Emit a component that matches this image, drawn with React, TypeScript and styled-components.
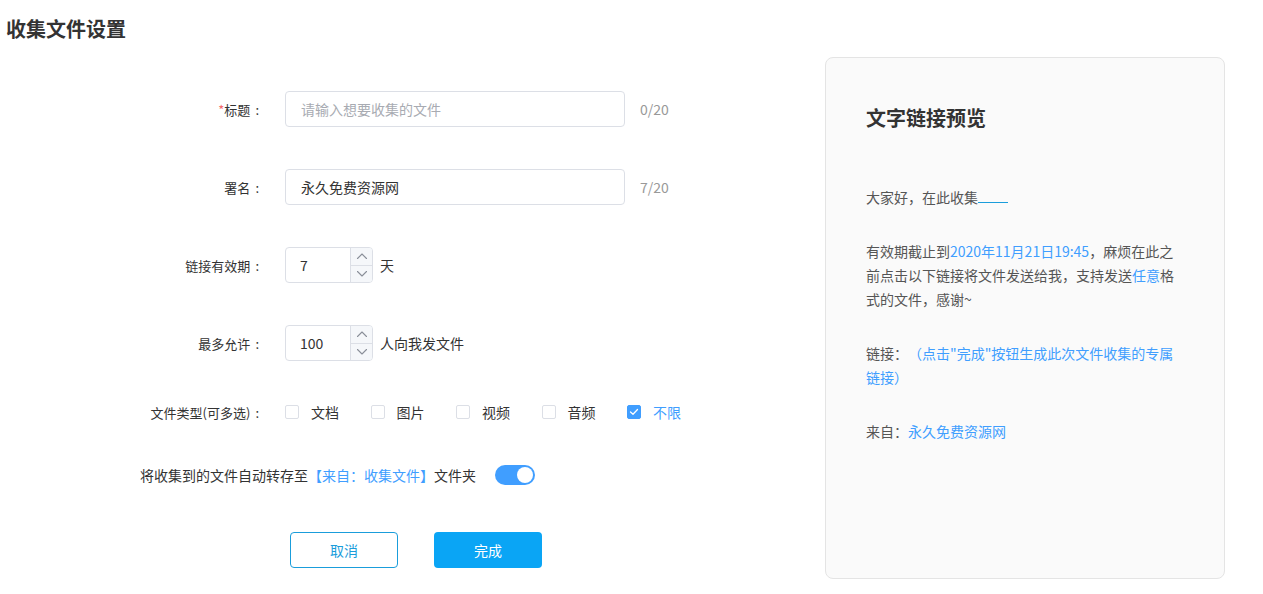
import React, { useState } from 'react';
import { createGlobalStyle, styled } from 'styled-components';

const GlobalStyle = createGlobalStyle`
  * { box-sizing: border-box; }
  body {
    margin: 0;
    background: #fff;
    font-family: 'Noto Sans CJK SC', 'Noto Sans', sans-serif;
    color: #333;
    text-spacing-trim: space-all;
  }
`;

const BLUE = '#409eff';

const Chevron = ({ up }: { up?: boolean }) => (
  <svg width="12" height="8" viewBox="0 0 12 8" fill="none">
    <path
      d={up ? 'M1.5 6.5 L6 2 L10.5 6.5' : 'M1.5 1.5 L6 6 L10.5 1.5'}
      stroke="#8a8f99"
      strokeWidth="1.1"
      strokeLinecap="round"
      strokeLinejoin="round"
    />
  </svg>
);

const CheckMark = () => (
  <svg width="10" height="8" viewBox="0 0 10 8" fill="none">
    <path d="M1.5 4 L4 6.3 L8.5 1.5" stroke="#fff" strokeWidth="1.3" strokeLinecap="round" strokeLinejoin="round" />
  </svg>
);

const fileTypes = ['文档', '图片', '视频', '音频', '不限'];

const App = () => {
  const [title, setTitle] = useState('');
  const [sign, setSign] = useState('永久免费资源网');
  const [days, setDays] = useState(7);
  const [limit, setLimit] = useState(100);
  const [checked, setChecked] = useState<string[]>(['不限']);
  const [autoSave, setAutoSave] = useState(true);

  const toggleType = (t: string) => {
    setChecked(checked.includes(t) ? checked.filter((c) => c !== t) : [...checked, t]);
  };

  return (
    <Page>
      <GlobalStyle />
      <Header>
        <h1>收集文件设置</h1>
      </Header>
      <Main>
        <Form>
          <FormItem $mb={42}>
            <Label>
              <Required>*</Required>标题
            </Label>
            <TextInput
              value={title}
              placeholder="请输入想要收集的文件"
              maxLength={20}
              onChange={(e) => setTitle(e.target.value)}
            />
            <Counter>{title.length}/20</Counter>
          </FormItem>
          <FormItem $mb={42}>
            <Label>署名</Label>
            <TextInput value={sign} maxLength={20} onChange={(e) => setSign(e.target.value)} />
            <Counter>{sign.length}/20</Counter>
          </FormItem>
          <FormItem $mb={42}>
            <Label>链接有效期</Label>
            <NumberBox>
              <NumberValue>{days}</NumberValue>
              <Stepper>
                <StepButton onClick={() => setDays(days + 1)}>
                  <Chevron up />
                </StepButton>
                <StepButton onClick={() => setDays(Math.max(1, days - 1))}>
                  <Chevron />
                </StepButton>
              </Stepper>
            </NumberBox>
            <Suffix>天</Suffix>
          </FormItem>
          <FormItem $mb={33}>
            <Label>最多允许</Label>
            <NumberBox>
              <NumberValue>{limit}</NumberValue>
              <Stepper>
                <StepButton onClick={() => setLimit(limit + 1)}>
                  <Chevron up />
                </StepButton>
                <StepButton onClick={() => setLimit(Math.max(1, limit - 1))}>
                  <Chevron />
                </StepButton>
              </Stepper>
            </NumberBox>
            <Suffix>人向我发文件</Suffix>
          </FormItem>
          <FormItem $mb={27}>
            <Label>文件类型(可多选)</Label>
            <CheckGroup>
              {fileTypes.map((t) => {
                const on = checked.includes(t);
                return (
                  <CheckItem key={t} onClick={() => toggleType(t)}>
                    <CheckBox $checked={on}>{on && <CheckMark />}</CheckBox>
                    <CheckText $checked={on}>{t}</CheckText>
                  </CheckItem>
                );
              })}
            </CheckGroup>
          </FormItem>
          <SwitchRow>
            <span>
              将收集到的文件自动转存至<Blue>【来自：收集文件】</Blue>文件夹
            </span>
            <Switch $on={autoSave} onClick={() => setAutoSave(!autoSave)}>
              <Knob $on={autoSave} />
            </Switch>
          </SwitchRow>
          <ButtonRow>
            <CancelButton>取消</CancelButton>
            <SubmitButton>完成</SubmitButton>
          </ButtonRow>
        </Form>

        <Preview>
          <PreviewTitle>文字链接预览</PreviewTitle>
          <Para>
            大家好，在此收集<Blank>{title}</Blank>
          </Para>
          <Para>
            有效期截止到<Blue>2020年11月21日19:45</Blue>，麻烦在此之前点击以下链接将文件发送给我，支持发送
            <Blue>任意</Blue>格式的文件，感谢~
          </Para>
          <Para>
            链接：<Blue>（点击"完成"按钮生成此次文件收集的专属链接）</Blue>
          </Para>
          <Para>
            来自：<Blue>{sign}</Blue>
          </Para>
        </Preview>
      </Main>
    </Page>
  );
};

export default App;

const Page = styled.div`
  width: 1263px;
  height: 594px;
  overflow: hidden;
`;

const Header = styled.div`
  height: 57px;
  padding: 15px 6px 0;

  > h1 {
    margin: 0;
    font-size: 20px;
    line-height: 28px;
    font-weight: 700;
    color: #333;
  }
`;

const Main = styled.div`
  display: flex;
`;

const Form = styled.div`
  width: 825px;
  padding-top: 34px;
  display: flex;
  flex-direction: column;
`;

const FormItem = styled.div<{ $mb: number }>`
  display: flex;
  align-items: center;
  height: 36px;
  margin-bottom: ${(p) => p.$mb}px;
`;

const Label = styled.label`
  width: 260px;
  padding-right: 1px;
  margin-right: 25px;
  text-align: right;
  font-size: 13px;
  color: #333;
  white-space: nowrap;

  &::after {
    content: ':';
    margin-left: 5px;
  }
`;

const Required = styled.span`
  color: #f56c6c;
`;

const TextInput = styled.input`
  width: 340px;
  height: 36px;
  padding: 0 15px;
  border: 1px solid #dcdfe6;
  border-radius: 4px;
  outline: none;
  font-family: inherit;
  font-size: 14px;
  color: #333;

  &::placeholder {
    color: #a8abb2;
  }
`;

const Counter = styled.span`
  margin-left: 15px;
  font-size: 14px;
  color: #999;
`;

const NumberBox = styled.div`
  display: flex;
  width: 88px;
  height: 36px;
  border: 1px solid #dcdfe6;
  border-radius: 4px;
  overflow: hidden;
`;

const NumberValue = styled.div`
  flex: 1;
  display: flex;
  align-items: center;
  padding-left: 14px;
  font-size: 14px;
  color: #333;
`;

const Stepper = styled.div`
  width: 22px;
  display: flex;
  flex-direction: column;
  border-left: 1px solid #dcdfe6;
  background: #f5f7fa;
`;

const StepButton = styled.div`
  flex: 1;
  display: flex;
  align-items: center;
  justify-content: center;
  cursor: pointer;

  & + & {
    border-top: 1px solid #dcdfe6;
  }
`;

const Suffix = styled.span`
  margin-left: 7px;
  font-size: 14px;
  color: #333;
`;

const CheckGroup = styled.div`
  display: flex;
  align-items: center;
`;

const CheckItem = styled.div`
  display: flex;
  align-items: center;
  margin-right: 31.5px;
  cursor: pointer;
`;

const CheckBox = styled.span<{ $checked: boolean }>`
  display: flex;
  align-items: center;
  justify-content: center;
  width: 14px;
  height: 14px;
  border: 1px solid ${(p) => (p.$checked ? BLUE : '#dcdfe6')};
  border-radius: 2px;
  background: ${(p) => (p.$checked ? BLUE : '#fff')};
`;

const CheckText = styled.span<{ $checked: boolean }>`
  margin-left: 12px;
  font-size: 14px;
  color: ${(p) => (p.$checked ? BLUE : '#333')};
`;

const SwitchRow = styled.div`
  display: flex;
  align-items: center;
  height: 36px;
  padding-left: 140px;
  font-size: 14px;
  color: #333;
  margin-bottom: 39px;
`;

const Blue = styled.span`
  color: ${BLUE};
`;

const Switch = styled.div<{ $on: boolean }>`
  position: relative;
  width: 40px;
  height: 20px;
  margin-left: 19px;
  border-radius: 10px;
  background: ${(p) => (p.$on ? BLUE : '#dcdfe6')};
  cursor: pointer;
`;

const Knob = styled.span<{ $on: boolean }>`
  position: absolute;
  top: 2px;
  left: ${(p) => (p.$on ? '22px' : '2px')};
  width: 16px;
  height: 16px;
  border-radius: 50%;
  background: #fff;
`;

const ButtonRow = styled.div`
  display: flex;
  gap: 36px;
  padding-left: 290px;
`;

const Button = styled.button`
  width: 108px;
  height: 36px;
  border-radius: 4px;
  font-family: inherit;
  font-size: 14px;
  cursor: pointer;
`;

const CancelButton = styled(Button)`
  background: #fff;
  border: 1px solid #1a9ddb;
  color: #1a9ddb;
`;

const SubmitButton = styled(Button)`
  background: #0aa5f5;
  border: none;
  color: #fff;
`;

const Preview = styled.div`
  width: 400px;
  height: 522px;
  padding: 46px 43px 0 40px;
  background: #fafafa;
  border: 1px solid #e4e4e4;
  border-radius: 8px;
`;

const PreviewTitle = styled.h2`
  margin: 0 0 53px;
  font-size: 20px;
  line-height: 28px;
  font-weight: 700;
  color: #333;
`;

const Para = styled.p`
  margin: 0 0 30px;
  font-size: 14px;
  line-height: 24px;
  color: #555;
`;

const Blank = styled.span`
  display: inline-block;
  min-width: 30px;
  line-height: 16px;
  border-bottom: 1px solid #1a9ddb;
  color: ${BLUE};
`;
